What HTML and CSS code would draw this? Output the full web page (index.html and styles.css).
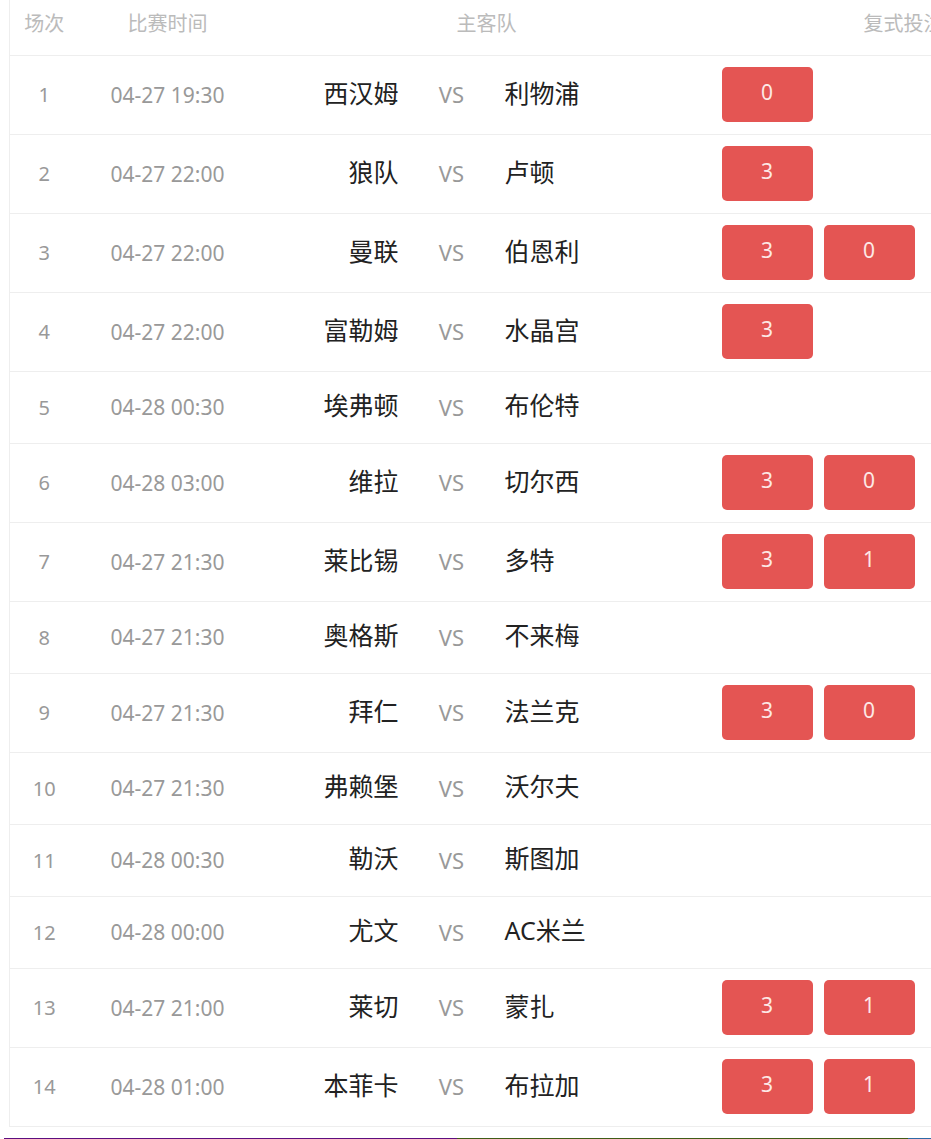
FILE: index.html
```html
<!DOCTYPE html>
<html lang="zh-CN">
<head>
<meta charset="utf-8">
<title>复式投注</title>
<link rel="stylesheet" href="styles.css">
</head>
<body>
<div class="viewport">
  <table class="matches">
    <colgroup>
      <col class="c-no"><col class="c-time"><col class="c-teams"><col class="c-bet">
    </colgroup>
    <thead>
      <tr>
        <th>场次</th><th>比赛时间</th><th>主客队</th><th>复式投注</th>
      </tr>
    </thead>
    <tbody>
      <tr class="tall"><td class="no">1</td><td class="time">04-27 19:30</td><td><div class="teams"><span class="home">西汉姆</span><span class="vs">VS</span><span class="away">利物浦</span></div></td><td><div class="bets"><span class="btn">0</span></div></td></tr>
      <tr class="tall"><td class="no">2</td><td class="time">04-27 22:00</td><td><div class="teams"><span class="home">狼队</span><span class="vs">VS</span><span class="away">卢顿</span></div></td><td><div class="bets"><span class="btn">3</span></div></td></tr>
      <tr class="tall"><td class="no">3</td><td class="time">04-27 22:00</td><td><div class="teams"><span class="home">曼联</span><span class="vs">VS</span><span class="away">伯恩利</span></div></td><td><div class="bets"><span class="btn">3</span><span class="btn">0</span></div></td></tr>
      <tr class="tall"><td class="no">4</td><td class="time">04-27 22:00</td><td><div class="teams"><span class="home">富勒姆</span><span class="vs">VS</span><span class="away">水晶宫</span></div></td><td><div class="bets"><span class="btn">3</span></div></td></tr>
      <tr class="short"><td class="no">5</td><td class="time">04-28 00:30</td><td><div class="teams"><span class="home">埃弗顿</span><span class="vs">VS</span><span class="away">布伦特</span></div></td><td></td></tr>
      <tr class="tall"><td class="no">6</td><td class="time">04-28 03:00</td><td><div class="teams"><span class="home">维拉</span><span class="vs">VS</span><span class="away">切尔西</span></div></td><td><div class="bets"><span class="btn">3</span><span class="btn">0</span></div></td></tr>
      <tr class="tall"><td class="no">7</td><td class="time">04-27 21:30</td><td><div class="teams"><span class="home">莱比锡</span><span class="vs">VS</span><span class="away">多特</span></div></td><td><div class="bets"><span class="btn">3</span><span class="btn">1</span></div></td></tr>
      <tr class="short"><td class="no">8</td><td class="time">04-27 21:30</td><td><div class="teams"><span class="home">奥格斯</span><span class="vs">VS</span><span class="away">不来梅</span></div></td><td></td></tr>
      <tr class="tall"><td class="no">9</td><td class="time">04-27 21:30</td><td><div class="teams"><span class="home">拜仁</span><span class="vs">VS</span><span class="away">法兰克</span></div></td><td><div class="bets"><span class="btn">3</span><span class="btn">0</span></div></td></tr>
      <tr class="short"><td class="no">10</td><td class="time">04-27 21:30</td><td><div class="teams"><span class="home">弗赖堡</span><span class="vs">VS</span><span class="away">沃尔夫</span></div></td><td></td></tr>
      <tr class="short"><td class="no">11</td><td class="time">04-28 00:30</td><td><div class="teams"><span class="home">勒沃</span><span class="vs">VS</span><span class="away">斯图加</span></div></td><td></td></tr>
      <tr class="short"><td class="no">12</td><td class="time">04-28 00:00</td><td><div class="teams"><span class="home">尤文</span><span class="vs">VS</span><span class="away">AC米兰</span></div></td><td></td></tr>
      <tr class="tall"><td class="no">13</td><td class="time">04-27 21:00</td><td><div class="teams"><span class="home">莱切</span><span class="vs">VS</span><span class="away">蒙扎</span></div></td><td><div class="bets"><span class="btn">3</span><span class="btn">1</span></div></td></tr>
      <tr class="tall"><td class="no">14</td><td class="time">04-28 01:00</td><td><div class="teams"><span class="home">本菲卡</span><span class="vs">VS</span><span class="away">布拉加</span></div></td><td><div class="bets"><span class="btn">3</span><span class="btn">1</span></div></td></tr>
    </tbody>
  </table>
  <div class="footer-tabs">
    <span class="tab purple"></span><span class="tab green"></span><span class="tab blue"></span>
  </div>
</div>
</body>
</html>
```

FILE: styles.css
```css
html, body {
  margin: 0;
  padding: 0;
  background: #fff;
  overflow: hidden;
}
body {
  font-family: "Noto Sans", "Noto Sans CJK SC", sans-serif;
  color: #222;
}
.viewport {
  width: 931px;
  height: 1139px;
  overflow: hidden;
}
.matches {
  margin-left: 9px;
  width: 1081px;
  border-collapse: collapse;
  table-layout: fixed;
  border-left: 1px solid #eee;
  border-bottom: 1px solid #eee;
}
.c-no { width: 69px; }
.c-time { width: 178px; }
.c-teams { width: 460px; }
.c-bet { width: 374px; }
.matches th {
  height: 55px;
  padding: 0 0 10px;
  box-sizing: border-box;
  font-weight: normal;
  font-size: 20px;
  color: #bbb;
  text-align: center;
  vertical-align: middle;
  border-bottom: 1px solid #eee;
  font-family: "Noto Sans CJK SC", sans-serif;
}
.matches td {
  padding: 0;
  vertical-align: middle;
  border-bottom: 1px solid #eee;
}
.matches tr.tall td { height: 78px; }
.matches tr.short td { height: 71px; }
.no {
  text-align: center;
  font-size: 20px;
  color: #999;
}
.time {
  text-align: center;
  font-size: 21px;
  color: #999;
}
.teams {
  display: flex;
  align-items: center;
  padding-bottom: 6px;
}
.home {
  width: 142px;
  text-align: right;
  font-size: 25px;
  color: #222;
}
.vs {
  width: 106px;
  text-align: center;
  font-size: 22px;
  color: #999;
  padding-top: 5px;
}
.away {
  font-size: 25px;
  color: #222;
}
.bets {
  display: flex;
  gap: 11px;
  padding-left: 5px;
}
.btn {
  width: 91px;
  height: 55px;
  border-radius: 5px;
  background: #e45553;
  color: #fde8e6;
  font-size: 21px;
  display: flex;
  align-items: center;
  justify-content: center;
  padding-bottom: 6px;
  box-sizing: border-box;
}
.footer-tabs {
  display: flex;
  margin-top: 11px;
  padding-left: 4px;
  height: 6px;
}
.tab { height: 6px; }
.purple { width: 453px; background: #5c0f7f; }
.green { width: 451px; background: #3f5d16; }
.blue { flex: 1; background: #2d6aa6; }
```
